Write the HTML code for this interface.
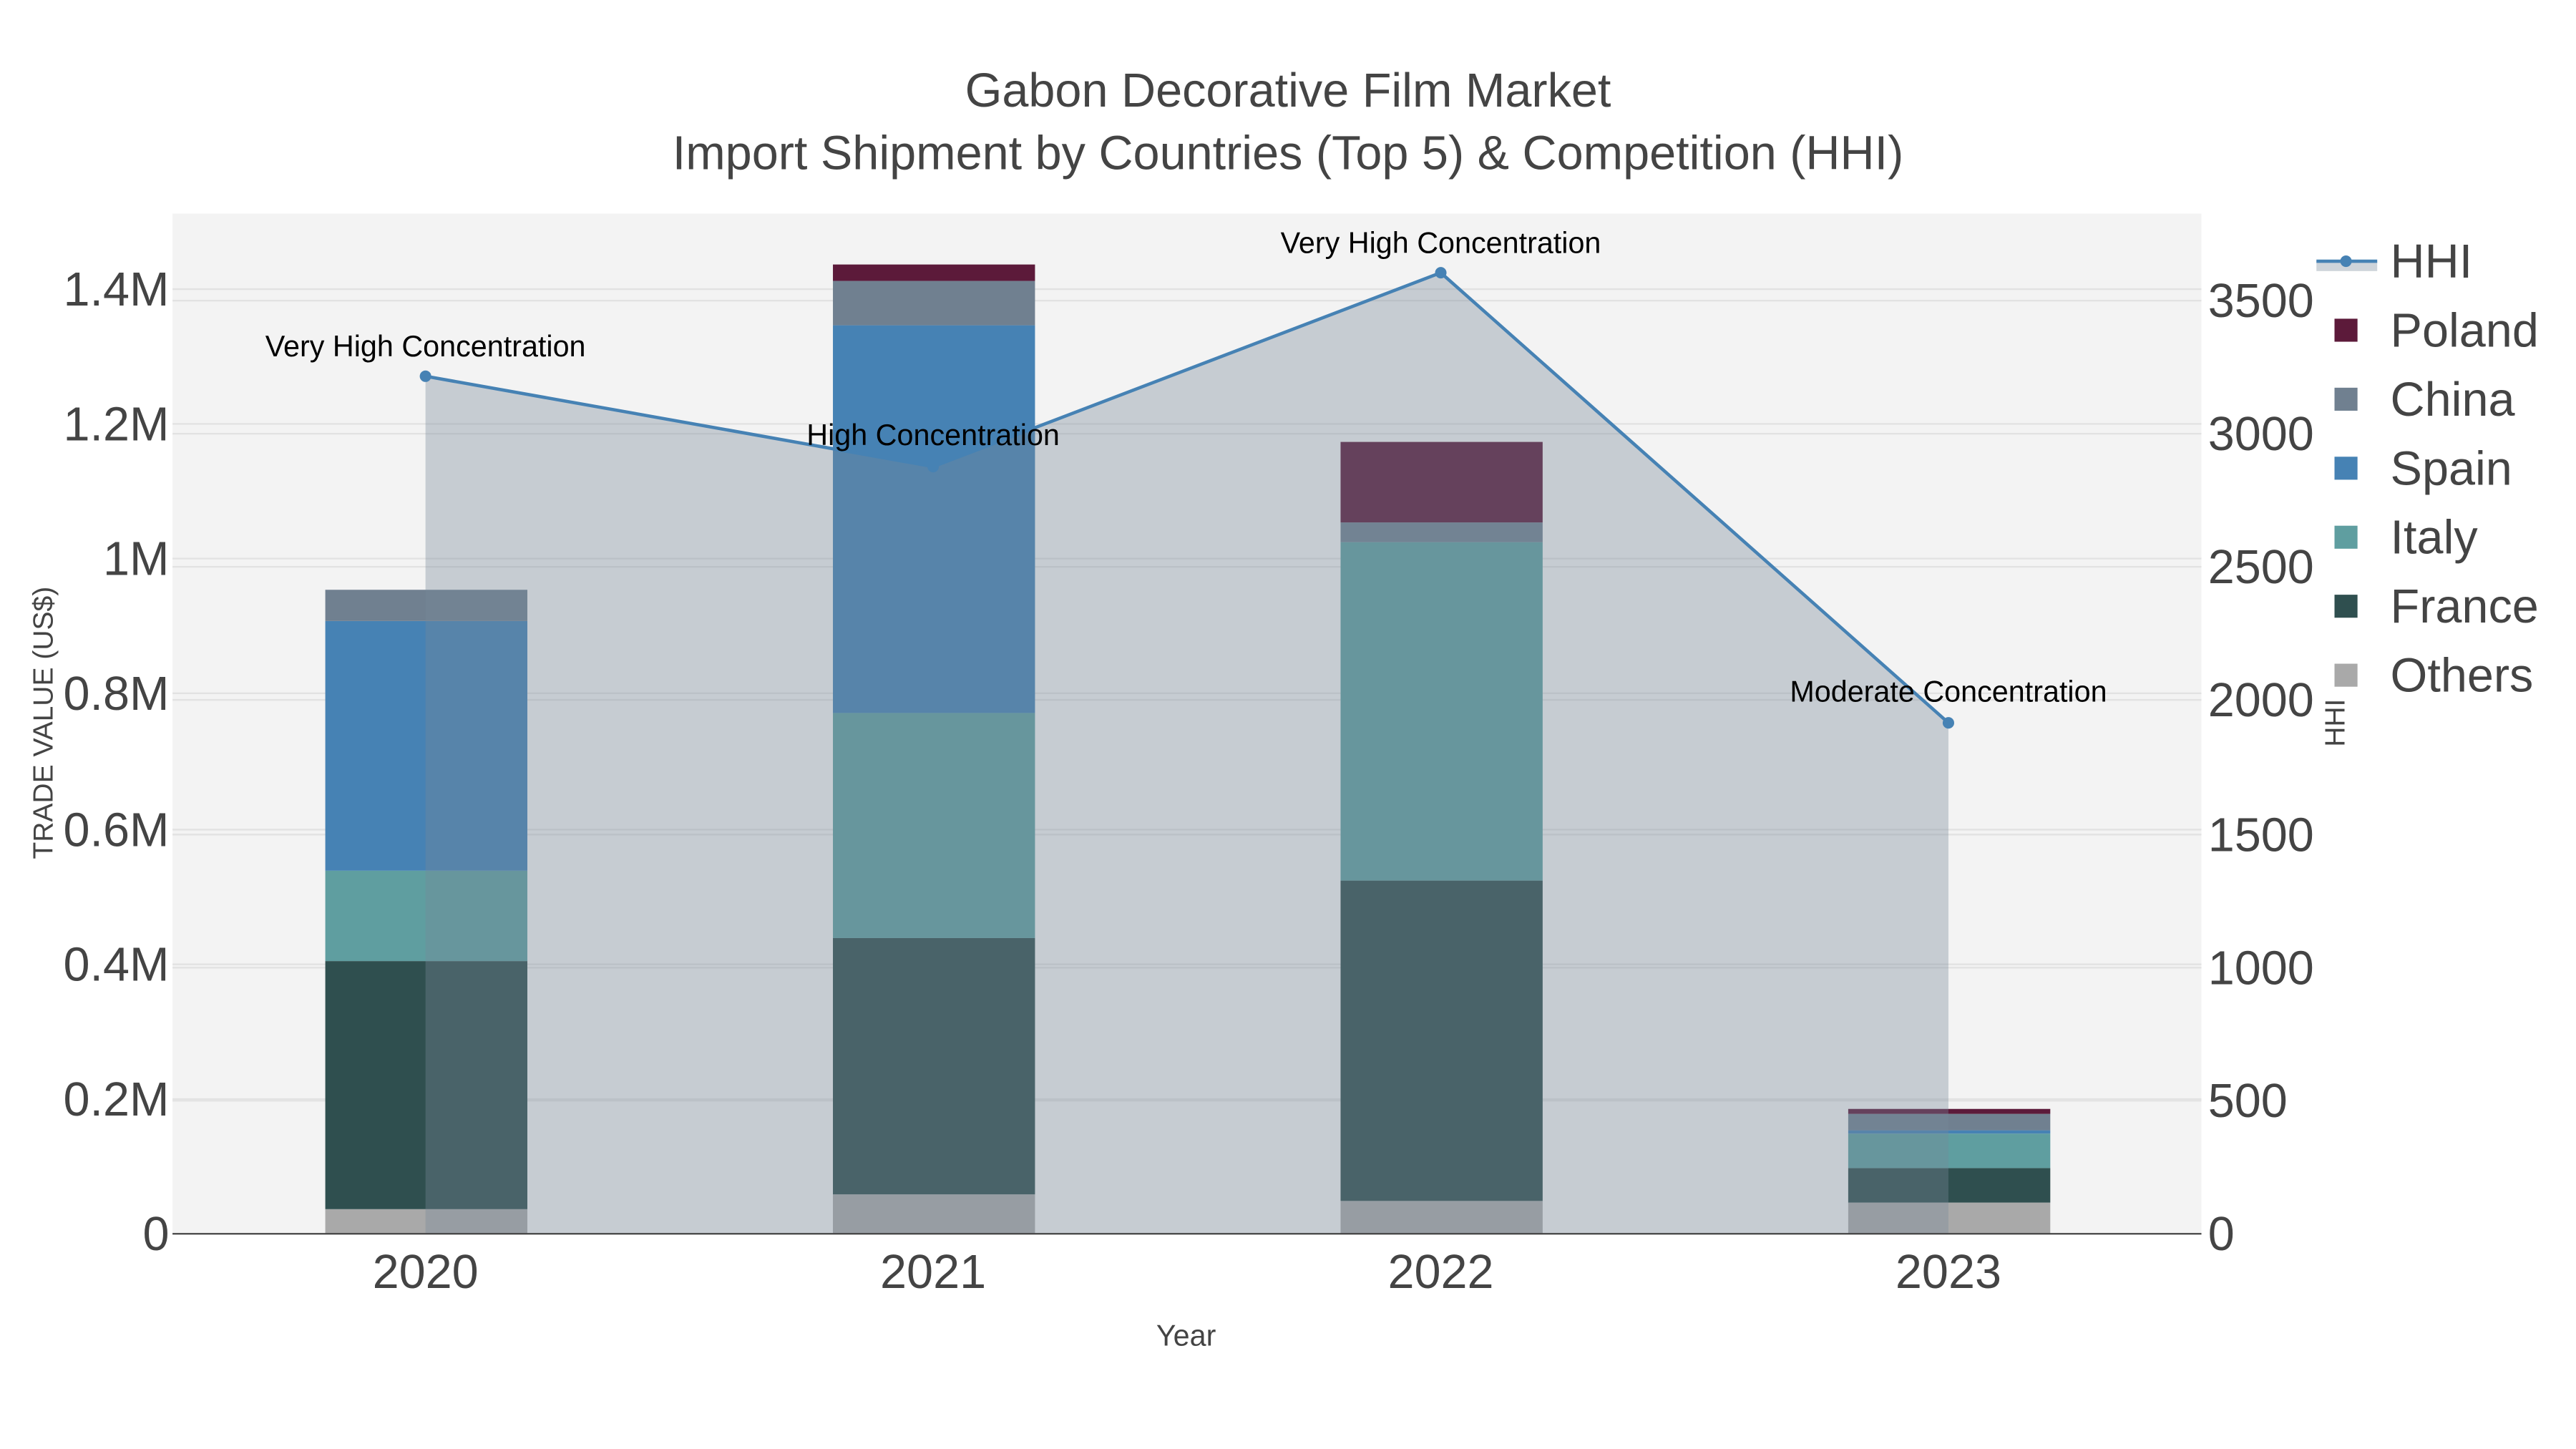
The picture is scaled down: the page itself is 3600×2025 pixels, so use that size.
<!DOCTYPE html>
<html><head><meta charset="utf-8"><style>html,body{margin:0;padding:0;background:#fff}svg{display:block}text{font-family:"Liberation Sans",sans-serif}</style></head><body>
<svg width="3600" height="2025" viewBox="0 0 1568 882" xmlns="http://www.w3.org/2000/svg">
<rect width="1568" height="882" fill="#fff"/>
<rect x="105" y="130" width="1235" height="621" fill="#f3f3f3"/>
<g stroke="#e2e2e2" stroke-width="1">
<line x1="105" x2="1340" y1="669" y2="669"/><line x1="105" x2="1340" y1="587" y2="587"/><line x1="105" x2="1340" y1="505" y2="505"/><line x1="105" x2="1340" y1="422" y2="422"/><line x1="105" x2="1340" y1="340" y2="340"/><line x1="105" x2="1340" y1="258" y2="258"/><line x1="105" x2="1340" y1="176" y2="176"/>
<line x1="105" x2="1340" y1="670" y2="670"/><line x1="105" x2="1340" y1="589" y2="589"/><line x1="105" x2="1340" y1="508" y2="508"/><line x1="105" x2="1340" y1="426" y2="426"/><line x1="105" x2="1340" y1="345" y2="345"/><line x1="105" x2="1340" y1="264" y2="264"/><line x1="105" x2="1340" y1="183" y2="183"/>
</g>
<rect x="198" y="736" width="123" height="15" fill="#a9a9a9"/>
<rect x="198" y="585" width="123" height="151" fill="#2f4f4f"/>
<rect x="198" y="530" width="123" height="55" fill="#5f9ea0"/>
<rect x="198" y="378" width="123" height="152" fill="#4682b4"/>
<rect x="198" y="359" width="123" height="19" fill="#708090"/>
<rect x="507" y="727" width="123" height="24" fill="#a9a9a9"/>
<rect x="507" y="571" width="123" height="156" fill="#2f4f4f"/>
<rect x="507" y="434" width="123" height="137" fill="#5f9ea0"/>
<rect x="507" y="198" width="123" height="236" fill="#4682b4"/>
<rect x="507" y="171" width="123" height="27" fill="#708090"/>
<rect x="507" y="161" width="123" height="10" fill="#5c1a3a"/>
<rect x="816" y="731" width="123" height="20" fill="#a9a9a9"/>
<rect x="816" y="536" width="123" height="195" fill="#2f4f4f"/>
<rect x="816" y="330" width="123" height="206" fill="#5f9ea0"/>
<rect x="816" y="318" width="123" height="12" fill="#708090"/>
<rect x="816" y="269" width="123" height="49" fill="#5c1a3a"/>
<rect x="1125" y="732" width="123" height="19" fill="#a9a9a9"/>
<rect x="1125" y="711" width="123" height="21" fill="#2f4f4f"/>
<rect x="1125" y="690" width="123" height="21" fill="#5f9ea0"/>
<rect x="1125" y="688" width="123" height="2" fill="#4682b4"/>
<rect x="1125" y="678" width="123" height="10" fill="#708090"/>
<rect x="1125" y="675" width="123" height="3" fill="#5c1a3a"/>
<path d="M259,229 L568,284 L877,166 L1186,440 L1186,751 L259,751 Z" fill="rgb(119,136,153)" fill-opacity="0.36"/>
<polyline points="259,229 568,284 877,166 1186,440" fill="none" stroke="#4682b4" stroke-width="2"/>
<g fill="#4682b4"><circle cx="259" cy="229" r="3.5"/><circle cx="568" cy="284" r="3.5"/><circle cx="877" cy="166" r="3.5"/><circle cx="1186" cy="440" r="3.5"/></g>
<line x1="105" x2="1340" y1="751" y2="751" stroke="#444" stroke-width="1"/>
<g font-size="18" fill="#000" text-anchor="middle">
<text x="259" y="217">Very High Concentration</text>
<text x="568" y="271">High Concentration</text>
<text x="877" y="154">Very High Concentration</text>
<text x="1186" y="427">Moderate Concentration</text>
</g>
<g font-size="29" fill="#444" text-anchor="middle">
<text x="784" y="65">Gabon Decorative Film Market</text>
<text x="784" y="103">Import Shipment by Countries (Top 5) &amp; Competition (HHI)</text>
</g>
<g font-size="29" fill="#444" text-anchor="end">
<text x="103" y="761">0</text><text x="103" y="679">0.2M</text><text x="103" y="597">0.4M</text><text x="103" y="515">0.6M</text><text x="103" y="432">0.8M</text><text x="103" y="350">1M</text><text x="103" y="268">1.2M</text><text x="103" y="186">1.4M</text>
</g>
<g font-size="29" fill="#444">
<text x="1344" y="761">0</text><text x="1344" y="680">500</text><text x="1344" y="599">1000</text><text x="1344" y="518">1500</text><text x="1344" y="436">2000</text><text x="1344" y="355">2500</text><text x="1344" y="274">3000</text><text x="1344" y="193">3500</text>
</g>
<g font-size="29" fill="#444" text-anchor="middle">
<text x="259" y="784">2020</text><text x="568" y="784">2021</text><text x="877" y="784">2022</text><text x="1186" y="784">2023</text>
</g>
<text x="722" y="819" font-size="18" fill="#444" text-anchor="middle">Year</text>
<text transform="translate(32,440) rotate(-90)" font-size="17" fill="#444" text-anchor="middle">TRADE VALUE (US$)</text>
<text transform="translate(1427,440) rotate(-90)" font-size="17" fill="#444" text-anchor="middle">HHI</text>
<rect x="1410" y="159" width="37" height="6" fill="rgb(119,136,153)" fill-opacity="0.36"/>
<line x1="1410" x2="1447" y1="159" y2="159" stroke="#4682b4" stroke-width="2"/>
<circle cx="1428" cy="159" r="3.5" fill="#4682b4"/>
<rect x="1421" y="194" width="14" height="14" fill="#5c1a3a"/>
<rect x="1421" y="236" width="14" height="14" fill="#708090"/>
<rect x="1421" y="278" width="14" height="14" fill="#4682b4"/>
<rect x="1421" y="320" width="14" height="14" fill="#5f9ea0"/>
<rect x="1421" y="362" width="14" height="14" fill="#2f4f4f"/>
<rect x="1421" y="404" width="14" height="14" fill="#a9a9a9"/>
<g font-size="29" fill="#444">
<text x="1455" y="169">HHI</text><text x="1455" y="211">Poland</text><text x="1455" y="253">China</text><text x="1455" y="295">Spain</text><text x="1455" y="337">Italy</text><text x="1455" y="379">France</text><text x="1455" y="421">Others</text>
</g>
</svg>
</body></html>
